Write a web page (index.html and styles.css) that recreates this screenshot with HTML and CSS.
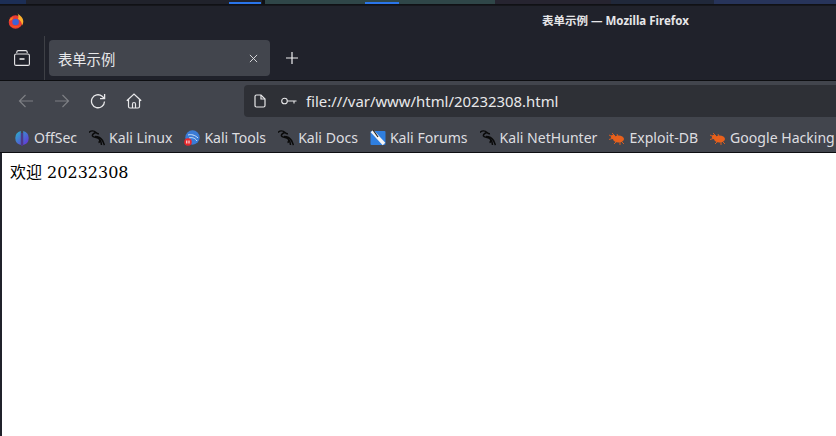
FILE: index.html
```html
<!DOCTYPE html>
<html lang="zh">
<head>
<meta charset="utf-8">
<title>表单示例</title>
<link rel="stylesheet" href="styles.css">
</head>
<body>
<div class="strip">
  <span class="seg s0"></span><span class="seg s1"></span><span class="seg s2"><i class="ind"></i></span><span class="seg s3"><i class="ind ind2"></i></span><span class="seg s4"></span><span class="seg s5"></span><span class="seg s6"></span>
</div>
<div class="titlebar">
  <svg class="fx" viewBox="0 0 16 16"><circle cx="7.500" cy="9" r="6.800" fill="#ea3a34"/><path d="M9.500 0c.5 2 5.800 3 5.800 8.500 0 1.500-.4 2.800-1.200 4-.2-3-1.800-5.500-4.300-6.500C11 4.500 10.300 2 9.500 0z" fill="#fbb02d"/><path d="M1 8c.6-2.500 2.500-3.600 4.500-3.800L3.800 7z" fill="#f6821f"/><circle cx="7.600" cy="9" r="3.300" fill="#3d62d6"/><path d="M1.500 11.500c2 3.800 9 4.300 12 .3-3 1.700-8 1.700-12-.3z" fill="#f2541f"/></svg>
  <span class="wintitle">表单示例 — Mozilla Firefox</span>
</div>
<div class="tabbar">
  <svg class="ico view" viewBox="0 0 16 16" fill="none" stroke="#e8e8ea" stroke-width="1.100"><path d="M2.800 3V2A1.500 1.500 0 0 1 4.300.6h7.400A1.500 1.500 0 0 1 13.200 2v1"/><path d="M.6 5.500A1.500 1.500 0 0 1 2.100 4h11.800a1.500 1.500 0 0 1 1.500 1.500v8.400a1.500 1.500 0 0 1-1.500 1.500H2.100a1.500 1.500 0 0 1-1.500-1.500z"/><path d="M5.500 9h5" stroke-width="1.600"/></svg>
  <span class="sep"></span>
  <div class="tab">
    <span class="tabtitle">表单示例</span>
    <svg class="close" viewBox="0 0 10 10" stroke="#e4e4e6" stroke-width="1" fill="none"><path d="M1 1l8 8M9 1l-8 8"/></svg>
  </div>
  <svg class="newtab" viewBox="0 0 12 12" stroke="#f0f0f2" stroke-width="1.200" fill="none"><path d="M6 0v12M0 6h12"/></svg>
</div>
<div class="navbar">
  <div class="navbtns">
    <svg class="ico" viewBox="0 0 16 16" fill="none" stroke="#7d7f84" stroke-width="1.200"><path d="M15 8H1.500M7.500 2l-6 6 6 6"/></svg>
    <svg class="ico" viewBox="0 0 16 16" fill="none" stroke="#7d7f84" stroke-width="1.200"><path d="M1 8h13.500M8.500 2l6 6-6 6"/></svg>
    <svg class="ico" viewBox="0 0 16 16" fill="none" stroke="#e8e8ea" stroke-width="1.300"><path d="M14.500 8.500a6.500 6.500 0 1 1-2.400-5.300L14 5"/><path d="M14.600 1v4.600H10" /></svg>
    <svg class="ico" viewBox="0 0 16 16" fill="none" stroke="#e8e8ea" stroke-width="1.200"><path d="M.8 7.800L8 1l7.200 6.800M2.500 6.500v7a1.500 1.500 0 0 0 1.500 1.500h8a1.500 1.500 0 0 0 1.500-1.500v-7M6.500 15v-4a1.500 1.500 0 0 1 3 0v4"/></svg>
  </div>
  <div class="urlbar">
    <svg class="doc" viewBox="0 0 12 14" fill="none" stroke="#e8e8ea" stroke-width="1.200"><path d="M1 2.500A1.500 1.500 0 0 1 2.500 1H7l4 4v6.500A1.500 1.500 0 0 1 9.500 13h-7A1.500 1.500 0 0 1 1 11.500z"/><path d="M7 1v4h4"/></svg>
    <svg class="key" viewBox="0 0 16 8" fill="none" stroke="#e8e8ea" stroke-width="1.100"><circle cx="3.500" cy="4" r="2.800"/><path d="M6.300 4H15.500M13 4v2.500"/></svg>
    <span class="url">file:///var/www/html/20232308.html</span>
  </div>
</div>
<div class="bookmarks">
  <span class="bm"><svg class="bi" viewBox="0 0 16 16"><defs><linearGradient id="os" x1="0" y1="0" x2="1" y2="1"><stop offset="0" stop-color="#27b5c9"/><stop offset="1" stop-color="#6a2bd9"/></linearGradient></defs><path d="M6.800 1A7.200 7.200 0 0 0 6.800 15zM9.200 1A7.200 7.200 0 0 1 9.200 15z" fill="url(#os)"/><rect x="7.500" y="3" width="1" height="13" fill="#5b2bc4"/></svg>OffSec</span>
  <span class="bm"><svg class="bi" viewBox="0 0 16 16"><use href="#dragon"/></svg>Kali Linux</span>
  <span class="bm"><svg class="bi" viewBox="0 0 16 16"><circle cx="8.500" cy="7.500" r="7.200" fill="#3a7bd5"/><path d="M4 5c3-1 7 0 10 3M5 8c3-1 6 0 8 3" stroke="#cfe3fa" fill="none"/><circle cx="4" cy="12" r="3.800" fill="#e8262b"/><path d="M2.800 10.500v3M5 10.500v3" stroke="#fff" stroke-width="1"/></svg>Kali Tools</span>
  <span class="bm"><svg class="bi" viewBox="0 0 16 16"><use href="#dragon"/></svg>Kali Docs</span>
  <span class="bm"><svg class="bi" viewBox="0 0 16 16"><rect x="0.500" y="1" width="15" height="14" rx="1" fill="#2f7fe0"/><path d="M2 1l12 13" stroke="#f4f4f4" stroke-width="3.500"/><path d="M3 0l5 7" stroke="#222" stroke-width="1.200"/></svg>Kali Forums</span>
  <span class="bm"><svg class="bi" viewBox="0 0 16 16"><use href="#dragon"/></svg>Kali NetHunter</span>
  <span class="bm"><svg class="bi" viewBox="0 0 16 16"><use href="#bug"/></svg>Exploit-DB</span>
  <span class="bm"><svg class="bi" viewBox="0 0 16 16"><use href="#bug"/></svg>Google Hacking</span>
</div>
<main class="page">
  <p class="welcome">欢迎 20232308</p>
</main>
<svg class="defs" width="0" height="0">
  <symbol id="dragon" viewBox="0 0 16 16"><path d="M0 2.500C2 .5 5 .5 7 2.500 8 3.500 9 4 10 3.800M7 2.500C5 3 3 4.500 3.500 6c.5 1.500 4 1 6 2.500 2 1.500 1.500 3.500 0 4M6 6.500c3 0 6 1.500 7.500 4 .7 1.200 1 3 2 4.500M11 9.500c1 2 1.500 3.500 1.500 5.500" fill="none" stroke="#0a0a0a" stroke-width="1.500"/></symbol>
  <symbol id="bug" viewBox="0 0 16 16"><ellipse cx="9.500" cy="9" rx="5.500" ry="3.500" fill="#e8601c"/><circle cx="4" cy="7" r="2.200" fill="#e8601c"/><path d="M0 9.500l5-1.500M3 3l3 3M8 4l1 2.500M5 14l3-3M11 15l0-3M15 14l-3-3M0 5l3 1.500" stroke="#e8601c" stroke-width=".9"/></symbol>
</svg>
</body>
</html>
```
FILE: styles.css
```css
* { box-sizing: border-box; }
html, body { margin: 0; padding: 0; }
body {
  width: 836px;
  height: 436px;
  overflow: hidden;
  background: #fff;
  font-family: "Noto Sans", "Noto Sans CJK SC", sans-serif;
  display: flex;
  flex-direction: column;
}
.strip {
  height: 6px;
  flex: none;
  display: flex;
  background: #101115;
  border-bottom: 1px solid #15161b;
}
.seg { display: block; height: 4px; }
.s0 { width: 26px; background: #1c2e55; }
.s1 { width: 203px; background: #20222b; }
.s2 { width: 33px; background: #20222b; margin-right: 3px; }
.s3 { width: 230px; background: #2f4648; padding-left: 100px; }
.ind { display: block; width: 32px; height: 2px; margin-top: 2px; background: #2a75ea; }
.ind2 { width: 34px; }
.s4 { width: 116px; background: #262430; }
.s5 { width: 103px; background: #20283a; }
.s6 { flex: 1; background: #27345a; }
.titlebar {
  height: 30px;
  flex: none;
  background: #20222b;
  display: flex;
  align-items: center;
  padding-left: 8px;
  position: relative;
}
.fx { width: 16px; height: 16px; margin-top: -1px; }
.wintitle {
  position: absolute;
  left: 542px;
  top: 7px;
  color: #e6e6e8;
  font-size: 11.5px;
  line-height: 15px;
  font-weight: 700;
}
.tabbar {
  height: 45px;
  flex: none;
  background: #20222b;
  display: flex;
  align-items: flex-start;
  padding-left: 14px;
  border-bottom: 1px solid #0d0e11;
}
.ico { width: 16px; height: 16px; flex: none; }
.view { margin-top: 14px; }
.sep { width: 1px; height: 44px; background: #3e4046; margin-left: 14px; margin-right: 4px; flex: none; }
.tab {
  width: 221px;
  height: 36px;
  margin-top: 4px;
  background: #42454d;
  border-radius: 4px;
  display: flex;
  align-items: center;
  justify-content: space-between;
  padding: 0 12px 0 9px;
}
.tabtitle { color: #e8e8ea; font-size: 14.3px; }
.close { width: 9px; height: 9px; }
.newtab { width: 12px; height: 12px; margin: 16px 0 0 16px; }
.navbar {
  height: 39px;
  flex: none;
  background: #42454d;
  display: flex;
  align-items: flex-start;
  padding-top: 4px;
  padding-left: 18px;
}
.navbtns { display: flex; gap: 20px; padding-top: 8px; align-items: center; width: 226px; flex: none; }
.urlbar {
  flex: 1;
  height: 32px;
  background: #2e3036;
  border-radius: 4px 0 0 4px;
  display: flex;
  align-items: center;
  padding-left: 10px;
}
.doc { width: 12px; height: 14px; flex: none; }
.key { width: 16px; height: 8px; margin-left: 15px; flex: none; }
.url { color: #e8e8ea; font-size: 14.9px; margin-left: 9px; }
.bookmarks {
  height: 33px;
  flex: none;
  background: #42454d;
  border-bottom: 1px solid #0d0e11;
  display: flex;
  align-items: flex-start;
  gap: 12px;
  padding: 6px 0 0 14px;
  overflow: hidden;
  white-space: nowrap;
}
.bm { display: flex; align-items: center; gap: 4px; color: #dedee0; font-size: 14.07px; line-height: 23px; flex: none; }
.bi { width: 16px; height: 16px; flex: none; }
.page { flex: 1; background: #fff; border-left: 2px solid #20222b; padding: 9px 8px 8px; }
.welcome { margin: 0; color: #000; font-size: 16px; line-height: 22px; font-family: "DejaVu Serif", "Noto Sans CJK SC", serif; }
.defs { position: absolute; }
```
